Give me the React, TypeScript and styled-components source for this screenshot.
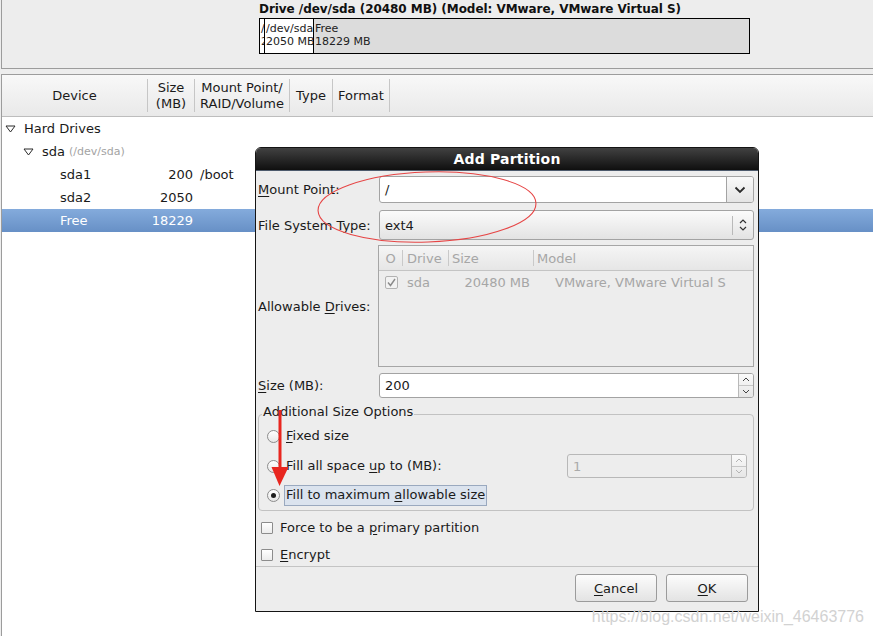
import styled, { createGlobalStyle } from "styled-components";

const GlobalStyle = createGlobalStyle`
  * { box-sizing: border-box; }
  html, body { margin: 0; padding: 0; }
  body {
    font-family: "DejaVu Sans", "Liberation Sans", sans-serif;
    font-size: 13px;
    color: #1a1a1a;
    background: #ededed;
  }
`;

interface Row {
  name: string;
  hint?: string;
  depth: number;
  expander?: boolean;
  size?: string;
  mount?: string;
  selected?: boolean;
}

const rows: Row[] = [
  { name: "Hard Drives", depth: 0, expander: true },
  { name: "sda", hint: "(/dev/sda)", depth: 1, expander: true },
  { name: "sda1", depth: 2, size: "200", mount: "/boot" },
  { name: "sda2", depth: 2, size: "2050" },
  { name: "Free", depth: 2, size: "18229", selected: true },
];

const Expander = () => (
  <svg width="11" height="8" viewBox="0 0 11 8">
    <polygon points="1,1 10,1 5.5,7" fill="none" stroke="#2b2b2b" strokeWidth="1" />
  </svg>
);

const ChevronDown = () => (
  <svg width="12" height="8" viewBox="0 0 12 8">
    <polyline points="1.5,1.5 6,6 10.5,1.5" fill="none" stroke="#2a2a2a" strokeWidth="1.8" />
  </svg>
);

const UpDown = () => (
  <svg width="8" height="14" viewBox="0 0 8 14">
    <polyline points="1,5 4,2 7,5" fill="none" stroke="#333" strokeWidth="1.2" />
    <polyline points="1,9 4,12 7,9" fill="none" stroke="#333" strokeWidth="1.2" />
  </svg>
);

const SmallArrow = ({ up, color }: { up?: boolean; color: string }) => (
  <svg width="8" height="5" viewBox="0 0 8 5">
    <polyline
      points={up ? "1,4 4,1 7,4" : "1,1 4,4 7,1"}
      fill="none"
      stroke={color}
      strokeWidth="1"
    />
  </svg>
);

const Tick = () => (
  <svg width="9" height="9" viewBox="0 0 9 9">
    <polyline points="1,4.5 3.5,7.5 8,1" fill="none" stroke="#8a8a8a" strokeWidth="1.4" />
  </svg>
);

export default function App() {
  return (
    <Page>
      <GlobalStyle />
      <DrivePanel>
        <DriveTitle>Drive /dev/sda (20480 MB) (Model: VMware, VMware Virtual S)</DriveTitle>
        <DriveBar>
          <Segment $w={5}>
            /<br />2
          </Segment>
          <Segment $w={49}>
            /dev/sda
            <br />
            2050 MB
          </Segment>
          <Segment $grow $bg="#dcdcdc">
            Free
            <br />
            18229 MB
          </Segment>
        </DriveBar>
      </DrivePanel>

      <ListFrame>
        <ListHeader>
          <HeadCell $w={145}>Device</HeadCell>
          <HeadSep />
          <HeadCell $w={46}>
            Size
            <br />
            (MB)
          </HeadCell>
          <HeadSep />
          <HeadCell $w={94}>
            Mount Point/
            <br />
            RAID/Volume
          </HeadCell>
          <HeadSep />
          <HeadCell $w={42}>Type</HeadCell>
          <HeadSep />
          <HeadCell $w={56}>Format</HeadCell>
          <HeadSep />
        </ListHeader>
        {rows.map((r) => (
          <TreeRow key={r.name} $selected={r.selected}>
            <NameCell $depth={r.depth}>
              <ExpanderSlot>{r.expander && <Expander />}</ExpanderSlot>
              {r.name}
              {r.hint && <Hint>{r.hint}</Hint>}
            </NameCell>
            <SizeCell>{r.size}</SizeCell>
            <MountCell>{r.mount}</MountCell>
          </TreeRow>
        ))}
      </ListFrame>

      <Dialog>
        <TitleBar>Add Partition</TitleBar>
        <DialogBody>
          <FormRow $top={0}>
            <FieldLabel>
              <Mn>M</Mn>ount Point:
            </FieldLabel>
            <EntryCombo>
              <EntryText>/</EntryText>
              <EntryButton>
                <ChevronDown />
              </EntryButton>
            </EntryCombo>
          </FormRow>

          <FormRow $top={7}>
            <FieldLabel>File System Type:</FieldLabel>
            <ComboButton>
              <ComboText>ext4</ComboText>
              <ComboSep />
              <ComboIcon>
                <UpDown />
              </ComboIcon>
            </ComboButton>
          </FormRow>

          <FormRow $top={5}>
            <FieldLabel>
              Allowable <Mn>D</Mn>rives:
            </FieldLabel>
            <DriveTree>
              <DriveTreeHead>
                <DCell $w={23} $center>
                  O
                </DCell>
                <DSep />
                <DCell $w={45} $pl={4}>
                  Drive
                </DCell>
                <DSep />
                <DCell $w={84} $pl={3}>
                  Size
                </DCell>
                <DSep />
                <DCell $pl={3}>Model</DCell>
              </DriveTreeHead>
              <DriveTreeRow>
                <DCell $w={23} $pl={6}>
                  <GreyCheck>
                    <Tick />
                  </GreyCheck>
                </DCell>
                <DCell $w={46} $pl={5}>
                  sda
                </DCell>
                <DCell $w={85} $right>
                  20480 MB
                </DCell>
                <DCell $pl={22}>VMware, VMware Virtual S</DCell>
              </DriveTreeRow>
            </DriveTree>
          </FormRow>

          <FormRow $top={6}>
            <FieldLabel>
              <Mn>S</Mn>ize (MB):
            </FieldLabel>
            <Spin $h={25}>
              <SpinText>200</SpinText>
              <SpinButtons>
                <SpinHalf>
                  <SmallArrow up color="#444" />
                </SpinHalf>
                <SpinHalf $bottom>
                  <SmallArrow color="#444" />
                </SpinHalf>
              </SpinButtons>
            </Spin>
          </FormRow>

          <OptionsFrame>
            <FrameLegend>Additional Size Options</FrameLegend>
            <RadioRow>
              <Radio />
              <RadioLabel>
                <Mn>F</Mn>ixed size
              </RadioLabel>
            </RadioRow>
            <RadioRow>
              <Radio />
              <RadioLabel>
                Fill all space <Mn>u</Mn>p to (MB):
              </RadioLabel>
              <Spin $h={24} $w={180} $disabled>
                <SpinText>1</SpinText>
                <SpinButtons>
                  <SpinHalf>
                    <SmallArrow up color="#b4b4b4" />
                  </SpinHalf>
                  <SpinHalf $bottom>
                    <SmallArrow color="#b4b4b4" />
                  </SpinHalf>
                </SpinButtons>
              </Spin>
            </RadioRow>
            <RadioRow $h={22}>
              <Radio $checked />
              <RadioLabel $focused>
                Fill to maximum <Mn>a</Mn>llowable size
              </RadioLabel>
            </RadioRow>
          </OptionsFrame>

          <CheckRow $top={5}>
            <CheckBox />
            <span>
              Force to be a <Mn>p</Mn>rimary partition
            </span>
          </CheckRow>
          <CheckRow $top={4}>
            <CheckBox />
            <span>
              <Mn>E</Mn>ncrypt
            </span>
          </CheckRow>
        </DialogBody>
        <ActionArea>
          <PushButton>
            <Mn>C</Mn>ancel
          </PushButton>
          <PushButton>
            <Mn>O</Mn>K
          </PushButton>
        </ActionArea>
      </Dialog>

      <Marks width="873" height="636" viewBox="0 0 873 636">
        <ellipse
          cx="427"
          cy="207"
          rx="109"
          ry="35"
          transform="rotate(-2 427 207)"
          fill="none"
          stroke="#e64545"
          strokeWidth="1.1"
        />
        <line x1="280" y1="410" x2="280" y2="470" stroke="#e8261f" strokeWidth="3" />
        <polygon points="271.5,467 288.5,467 279.5,486" fill="#e8261f" />
      </Marks>

      <Watermark>https://blog.csdn.net/weixin_46463776</Watermark>
    </Page>
  );
}

const Page = styled.div`
  position: relative;
  width: 873px;
  height: 636px;
  padding-left: 1px;
  display: flex;
  flex-direction: column;
  overflow: hidden;
  background: #ededed;
`;

const DrivePanel = styled.div`
  height: 69px;
  flex-shrink: 0;
  padding: 1px 0 0 257px;
  border-left: 1px solid #9c9c9c;
  border-bottom: 1px solid #9c9c9c;
`;

const DriveTitle = styled.div`
  font-weight: bold;
  font-size: 12px;
  line-height: 16px;
  letter-spacing: -0.05px;
  color: #111;
`;

const DriveBar = styled.div`
  margin-top: 1px;
  width: 491px;
  height: 36px;
  display: flex;
  border: 1px solid #000;
`;

const Segment = styled.div<{ $w?: number; $grow?: boolean; $bg?: string }>`
  ${(p) => (p.$grow ? "flex: 1;" : `width: ${p.$w}px; flex-shrink: 0; border-right: 1px solid #000;`)}
  background: ${(p) => p.$bg ?? "#fff"};
  padding: 3px 0 0 1px;
  font-size: 11px;
  line-height: 13px;
  white-space: nowrap;
  overflow: hidden;
  color: #222;
`;

const ListFrame = styled.div`
  flex: 1;
  margin-top: 5px;
  background: #fff;
  border-top: 1px solid #9c9c9c;
  border-left: 1px solid #9c9c9c;
`;

const ListHeader = styled.div`
  height: 42px;
  display: flex;
  background: linear-gradient(#f8f8f8, #e9e9e9);
  border-bottom: 1px solid #bdbdbd;
`;

const HeadCell = styled.div<{ $w: number }>`
  width: ${(p) => p.$w}px;
  flex-shrink: 0;
  display: flex;
  align-items: center;
  justify-content: center;
  text-align: center;
  line-height: 16px;
  color: #1a1a1a;
`;

const HeadSep = styled.div`
  width: 1px;
  margin: 4px 0;
  background: #c6c6c6;
  flex-shrink: 0;
`;

const TreeRow = styled.div<{ $selected?: boolean }>`
  height: 23px;
  display: flex;
  align-items: center;
  background: ${(p) => (p.$selected ? "linear-gradient(#84abdc, #6790c6)" : "transparent")};
  color: ${(p) => (p.$selected ? "#fff" : "#1a1a1a")};
`;

const NameCell = styled.div<{ $depth: number }>`
  width: 146px;
  flex-shrink: 0;
  display: flex;
  align-items: center;
  padding-left: ${(p) => 3 + p.$depth * 18}px;
  white-space: nowrap;
`;

const ExpanderSlot = styled.span`
  width: 19px;
  display: inline-flex;
  align-items: center;
`;

const Hint = styled.span`
  margin-left: 4px;
  font-size: 11px;
  color: #a3a3a3;
`;

const SizeCell = styled.div`
  width: 46px;
  padding-right: 1px;
  text-align: right;
`;

const MountCell = styled.div`
  padding-left: 6px;
`;

const Dialog = styled.div`
  position: absolute;
  left: 255px;
  top: 147px;
  width: 504px;
  height: 465px;
  display: flex;
  flex-direction: column;
  background: #ededed;
  border: 1px solid #141414;
  border-radius: 6px 6px 0 0;
  overflow: hidden;
`;

const TitleBar = styled.div`
  height: 23px;
  flex-shrink: 0;
  display: flex;
  align-items: center;
  justify-content: center;
  background: linear-gradient(#414141, #0f0f0f);
  border-bottom: 1px solid #4d5a6c;
  color: #fff;
  font-weight: bold;
  font-size: 14px;
  letter-spacing: 0.2px;
`;

const DialogBody = styled.div`
  flex: 1;
  min-height: 0;
  padding: 5px 4px 0 2px;
  display: flex;
  flex-direction: column;
`;

const FormRow = styled.div<{ $top: number }>`
  display: grid;
  grid-template-columns: 121px 1fr;
  align-items: center;
  margin-top: ${(p) => p.$top}px;
`;

const FieldLabel = styled.div`
  white-space: nowrap;
`;

const Mn = styled.span`
  text-decoration: underline;
  text-underline-offset: 2px;
`;

const EntryCombo = styled.div`
  height: 27px;
  display: flex;
  border: 1px solid #a3a3a3;
  border-radius: 3px;
  background: #fff;
  overflow: hidden;
`;

const EntryText = styled.div`
  flex: 1;
  display: flex;
  align-items: center;
  padding-left: 5px;
`;

const EntryButton = styled.div`
  width: 27px;
  display: flex;
  align-items: center;
  justify-content: center;
  border-left: 1px solid #a3a3a3;
  background: linear-gradient(#f9f9f9, #e4e4e4);
`;

const ComboButton = styled.div`
  height: 30px;
  display: flex;
  align-items: center;
  border: 1px solid #a3a3a3;
  border-radius: 3px;
  background: linear-gradient(#fbfbfb, #e3e3e3);
`;

const ComboText = styled.div`
  flex: 1;
  padding-left: 5px;
`;

const ComboSep = styled.div`
  width: 1px;
  height: 19px;
  background: #b9b9b9;
`;

const ComboIcon = styled.div`
  width: 20px;
  display: flex;
  justify-content: center;
`;

const DriveTree = styled.div`
  margin-left: -1px;
  height: 122px;
  border: 1px solid #a6a6a6;
  color: #a6a6a6;
`;

const DriveTreeHead = styled.div`
  height: 25px;
  display: flex;
  background: linear-gradient(#f5f5f5, #e6e6e6);
  border-bottom: 1px solid #c4c4c4;
`;

const DriveTreeRow = styled.div`
  height: 23px;
  display: flex;
  align-items: center;
`;

const DCell = styled.div<{ $w?: number; $pl?: number; $center?: boolean; $right?: boolean }>`
  ${(p) => (p.$w ? `width: ${p.$w}px; flex-shrink: 0;` : "flex: 1;")}
  display: flex;
  align-items: center;
  justify-content: ${(p) => (p.$center ? "center" : p.$right ? "flex-end" : "flex-start")};
  padding-left: ${(p) => p.$pl ?? 0}px;
  padding-right: ${(p) => (p.$right ? 3 : 0)}px;
  white-space: nowrap;
`;

const DSep = styled.div`
  width: 1px;
  margin: 4px 0;
  background: #c9c9c9;
`;

const GreyCheck = styled.span`
  width: 13px;
  height: 13px;
  display: inline-flex;
  align-items: center;
  justify-content: center;
  border: 1px solid #b2b2b2;
  border-radius: 2px;
  background: #f2f2f2;
`;

const Spin = styled.div<{ $h: number; $w?: number; $disabled?: boolean }>`
  height: ${(p) => p.$h}px;
  ${(p) => (p.$w ? `width: ${p.$w}px; margin-left: auto; margin-right: 6px;` : "")}
  display: flex;
  border: 1px solid ${(p) => (p.$disabled ? "#b8b8b8" : "#a3a3a3")};
  border-radius: 3px;
  background: ${(p) => (p.$disabled ? "#ededed" : "#fff")};
  color: ${(p) => (p.$disabled ? "#aaaaaa" : "#1a1a1a")};
  overflow: hidden;
`;

const SpinText = styled.div`
  flex: 1;
  display: flex;
  align-items: center;
  padding-left: 5px;
`;

const SpinButtons = styled.div`
  width: 15px;
  display: flex;
  flex-direction: column;
  border-left: 1px solid #b9b9b9;
  background: linear-gradient(#fafafa, #e6e6e6);
`;

const SpinHalf = styled.div<{ $bottom?: boolean }>`
  flex: 1;
  display: flex;
  align-items: center;
  justify-content: center;
  ${(p) => (p.$bottom ? "border-top: 1px solid #c6c6c6;" : "")}
`;

const OptionsFrame = styled.fieldset`
  margin: 6px 0 0;
  padding: 0 0 4px;
  border: 1px solid #c2c2c2;
  border-radius: 4px;
  display: flex;
  flex-direction: column;
  gap: 6px;
  min-width: 0;
`;

const FrameLegend = styled.legend`
  margin-left: 3px;
  padding: 0 1px 4px;
  line-height: 16px;
`;

const RadioRow = styled.div<{ $h?: number }>`
  height: ${(p) => p.$h ?? 24}px;
  display: flex;
  align-items: center;
  padding-left: 8px;
  white-space: nowrap;
`;

const Radio = styled.span<{ $checked?: boolean }>`
  width: 13px;
  height: 13px;
  flex-shrink: 0;
  display: inline-flex;
  align-items: center;
  justify-content: center;
  border: 1px solid #8c8c8c;
  border-radius: 50%;
  background: linear-gradient(#ffffff, #e7e7e7);
  &::after {
    content: "";
    width: 5px;
    height: 5px;
    border-radius: 50%;
    background: ${(p) => (p.$checked ? "#1e1e1e" : "transparent")};
  }
`;

const RadioLabel = styled.span<{ $focused?: boolean }>`
  margin-left: 4px;
  padding: 1px 1px 2px;
  border: 1px solid ${(p) => (p.$focused ? "#9aa9bf" : "transparent")};
  background: ${(p) => (p.$focused ? "#dbe3ee" : "transparent")};
  line-height: 16px;
`;

const CheckRow = styled.div<{ $top: number }>`
  height: 23px;
  flex-shrink: 0;
  margin-top: ${(p) => p.$top}px;
  display: flex;
  align-items: center;
  gap: 7px;
  padding-left: 3px;
`;

const CheckBox = styled.span`
  width: 12px;
  height: 12px;
  border: 1px solid #8c8c8c;
  border-radius: 1px;
  background: linear-gradient(#ffffff, #ececec);
`;

const ActionArea = styled.div`
  height: 45px;
  flex-shrink: 0;
  display: flex;
  justify-content: flex-end;
  gap: 9px;
  padding: 7px 10px 0 0;
  border-top: 1px solid #c4c4c4;
`;

const PushButton = styled.div`
  width: 82px;
  height: 28px;
  display: flex;
  align-items: center;
  justify-content: center;
  border: 1px solid #9b9b9b;
  border-radius: 3px;
  background: linear-gradient(#fcfcfc, #e3e3e3);
`;

const Marks = styled.svg`
  position: absolute;
  left: 0;
  top: 0;
  pointer-events: none;
`;

const Watermark = styled.div`
  position: absolute;
  right: 9px;
  bottom: 10px;
  font-family: "Liberation Sans", Arial, sans-serif;
  font-size: 16px;
  line-height: 18px;
  color: #d2d2d2;
`;
